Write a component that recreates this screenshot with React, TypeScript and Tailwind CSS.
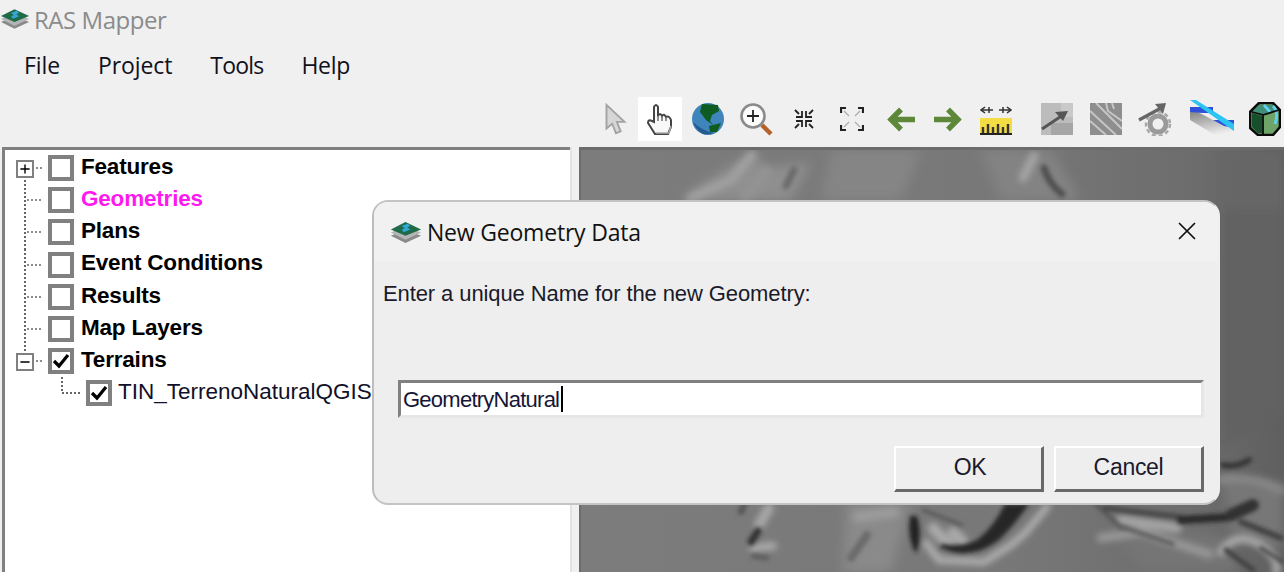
import { Minus, Plus, X } from "lucide-react"

const sans = "font-['Open_Sans','Noto_Sans',sans-serif]"
const ms = "font-['Liberation_Sans',Arial,sans-serif]"

const treeItems = [
  { name: "Features", expander: "plus", bold: true },
  { name: "Geometries", bold: true, pink: true },
  { name: "Plans", bold: true },
  { name: "Event Conditions", bold: true },
  { name: "Results", bold: true },
  { name: "Map Layers", bold: true },
  { name: "Terrains", expander: "minus", bold: true, checked: true },
]

function RasIcon({ className }: { className?: string }) {
  return (
    <svg viewBox="0 0 32 24" className={className}>
      <path d="M1 15 L15 9 L30 15 L15 22 Z" fill="#8a8a8a" />
      <path d="M1 12 L15 6 L30 12 L15 19 Z" fill="#b5b5b5" />
      <path d="M1 9 L15 2 L30 9 L15 15 Z" fill="#1f6b47" />
      <path d="M12 10 L16 8 L13 6 L18 4 M19 5 L15 7 L18 9 L13 11" stroke="#35a7d8" strokeWidth="1.6" fill="none" />
    </svg>
  )
}

function Check() {
  return (
    <svg viewBox="0 0 18 18" className="h-[18px] w-[18px]">
      <path d="M2 9 L7 14 L16 3" stroke="#000" strokeWidth="3.2" fill="none" />
    </svg>
  )
}

function CheckBox({ checked }: { checked?: boolean }) {
  return (
    <span className="flex h-[26px] w-[26px] shrink-0 items-center justify-center border-[4px] border-[#808080] bg-white">
      {checked && <Check />}
    </span>
  )
}

function Connector({ expander, last }: { expander?: string; last?: boolean }) {
  return (
    <span className="relative h-[32.2px] w-[48px] shrink-0">
      <svg width="48" height="33" className="block">
        {expander !== "plus" && !last && <path d="M25 0 V33" stroke="#666" strokeWidth="2" strokeDasharray="2 2" />}
        {expander === "plus" && <path d="M25 24 V33" stroke="#666" strokeWidth="2" strokeDasharray="2 2" />}
        {last && <path d="M25 0 V8" stroke="#666" strokeWidth="2" strokeDasharray="2 2" />}
        <path d={expander ? "M36 16 H44" : "M27 16 H43"} stroke="#666" strokeWidth="1.5" strokeDasharray="2 2" />
      </svg>
      {expander && (
        <span className="absolute left-[16px] top-[8px] flex h-[18px] w-[18px] items-center justify-center border-2 border-[#808080] bg-white">
          {expander === "plus" ? <Plus size={14} strokeWidth={2.4} color="#000" /> : <Minus size={14} strokeWidth={2.4} color="#000" />}
        </span>
      )}
    </span>
  )
}

function Terrain() {
  return (
    <svg viewBox="0 0 703 422" preserveAspectRatio="none" className="block h-full w-full">
      <defs>
        <filter id="b6" x="-20%" y="-20%" width="140%" height="140%"><feGaussianBlur stdDeviation="6" /></filter>
        <filter id="b3" x="-20%" y="-20%" width="140%" height="140%"><feGaussianBlur stdDeviation="3" /></filter>
        <filter id="b2" x="-20%" y="-20%" width="140%" height="140%"><feGaussianBlur stdDeviation="1.9" /></filter>
        <linearGradient id="base" x1="0" x2="1" y1="0" y2="0">
          <stop offset="0" stopColor="#7c7c7c" />
          <stop offset="0.6" stopColor="#787878" />
          <stop offset="0.88" stopColor="#6c6c6c" />
          <stop offset="1" stopColor="#5f5f5f" />
        </linearGradient>
      </defs>
      <rect width="703" height="422" fill="url(#base)" />

      {/* broad shading */}
      <g filter="url(#b6)">
        <path d="M98 50 L126 30 L171 3 L188 18 L230 12 L210 50 Z" fill="#8f8f8f" />
        <path d="M250 0 L340 0 L320 50 L240 50 Z" fill="#858585" />
        <path d="M400 0 L470 0 L500 50 L420 50 Z" fill="#838383" />
        <path d="M640 0 L703 0 L703 60 L640 60 Z" fill="#666" />
        <path d="M640 60 L703 60 L703 260 L640 300 Z" fill="#626262" />
        <path d="M265 352 L330 352 L310 422 L262 422 Z" fill="#8a8a8a" />
        <path d="M530 375 L640 385 L660 422 L560 422 Z" fill="#757575" />
        <path d="M640 325 L703 335 L703 400 L650 385 Z" fill="#777" />
      </g>

      {/* ridges, light */}
      <g filter="url(#b3)" fill="none" strokeLinecap="round" strokeLinejoin="round">
        <path d="M171 5 L150 30 L110 48" stroke="#a0a0a0" strokeWidth="9" />
        <path d="M185 22 L165 45" stroke="#939393" strokeWidth="12" />
        <path d="M453 6 L442 28" stroke="#a4a4a4" strokeWidth="9" />
        <path d="M466 357 L444 383 L430 395 L403 412 L358 410 L345 393" stroke="#afafaf" strokeWidth="7" />
        <path d="M352 378 L368 395 M372 382 L382 392" stroke="#aaa" strokeWidth="11" />
        <path d="M277 367 L313 362" stroke="#9b9b9b" strokeWidth="11" />
        <path d="M188 358 L178 375" stroke="#a8a8a8" strokeWidth="10" />
        <path d="M172 398 L192 396" stroke="#aaa" strokeWidth="8" />
        <path d="M540 370 L596 378" stroke="#a4a4a4" strokeWidth="10" />
        <path d="M520 388 L560 382 L628 404" stroke="#979797" strokeWidth="9" />
        <path d="M640 402 Q655 380 680 395 Q700 410 695 422" stroke="#a8a8a8" strokeWidth="8" />
        <path d="M640 330 Q670 326 700 340" stroke="#868686" strokeWidth="9" />
      </g>

      {/* channels, dark */}
      <g filter="url(#b2)" fill="none" strokeLinecap="round">
        <path d="M448 354 Q436 372 418 390 Q398 405 378 403 Q365 402 358 397 L362 394 Q380 398 396 390 Q412 378 424 354 Z" fill="#262626" />
        <path d="M336 366 Q342 385 335 404 Q326 388 329 366 Z" fill="#222" />
        <path d="M342 360 L381 375" stroke="#555" strokeWidth="3" />
        <path d="M213 20 L205 36" stroke="#6a6a6a" strokeWidth="7" />
        <path d="M463 18 Q468 34 481 44" stroke="#505050" strokeWidth="7" />
        <path d="M163 355 L160 362" stroke="#555" strokeWidth="6" />
        <path d="M177 381 L170 392" stroke="#333" strokeWidth="7" />
        <path d="M172 406 L186 408" stroke="#5c5c5c" strokeWidth="5" />
        <path d="M286 385 L270 408" stroke="#6a6a6a" strokeWidth="8" />
        <path d="M515 354 L540 378" stroke="#555" strokeWidth="4" />
        <path d="M538 376 L592 394" stroke="#5a5a5a" strokeWidth="4" />
        <path d="M524 358 L600 367" stroke="#444" strokeWidth="5" />
        <path d="M600 370 L650 367" stroke="#2c2c2c" strokeWidth="8" />
        <path d="M650 365 L672 355" stroke="#333" strokeWidth="12" />
        <path d="M660 372 L700 388" stroke="#404040" strokeWidth="6" />
        <path d="M642 315 Q655 318 668 310" stroke="#363636" strokeWidth="6" />
        <path d="M645 400 L672 420" stroke="#404040" strokeWidth="5" />
        <path d="M680 398 L702 412" stroke="#484848" strokeWidth="4" />
      </g>
    </svg>
  )
}

function Pointer() {
  return (
    <svg viewBox="0 0 24 36" className="h-[34px] w-[24px]">
      <path d="M3 3 V28 L9 23 L13 33 L18 31 L14 21 L22 21 Z" fill="#d6d6d6" stroke="#a3a3a3" strokeWidth="2" />
    </svg>
  )
}

function Hand() {
  return (
    <svg viewBox="0 0 28 34" className="h-[34px] w-[28px]">
      <path d="M8 20 L8 5 Q10 1 12 5 L12 14 Q14 10 16 14 Q18 11 20 15 Q23 13 25 18 L25 25 L22 32 L9 32 L2 21 Q2 17 6 19 Z" fill="#f8f8f8" stroke="#444" strokeWidth="2" />
      <path d="M12 14 V19 M16 14 V19 M20 15 V19" stroke="#666" strokeWidth="1.4" />
      <path d="M10 31 H23 L25 24" stroke="#aaa" strokeWidth="1.5" fill="none" />
    </svg>
  )
}

function Globe() {
  return (
    <svg viewBox="0 0 32 32" className="h-[32px] w-[32px]">
      <circle cx="16" cy="16" r="16" fill="#3f84ba" />
      <path d="M10 1 L26 2 L27 8 L20 12 L18 18 L21 22 L14 17 L8 9 Z" fill="#0f5c22" />
      <path d="M17 23 L29 20 L25 29 L18 29 Z" fill="#0f5c22" />
      <path d="M1 19 Q4 27 11 31 Q18 32 22 30 Q10 28 1 19" fill="#225a8f" />
    </svg>
  )
}

function Zoom() {
  return (
    <svg viewBox="0 0 34 34" className="h-[34px] w-[34px]">
      <circle cx="14" cy="14" r="11.5" fill="#fbfbfb" stroke="#8a8a8a" strokeWidth="2.6" />
      <path d="M8 14 H20 M14 8 V20" stroke="#222" strokeWidth="1.8" />
      <path d="M23 23 L32 32" stroke="#b4622b" strokeWidth="4.5" />
    </svg>
  )
}

function Shrink() {
  return (
    <svg viewBox="0 0 24 24" className="h-[24px] w-[24px]" fill="none" stroke="#222" strokeWidth="1.8">
      <path d="M3 3 L7 7 M4 10 H10 V4 M21 3 L17 7 M20 10 H14 V4 M3 21 L7 17 M4 14 H10 V20 M21 21 L17 17 M20 14 H14 V20" />
    </svg>
  )
}

function Expand() {
  return (
    <svg viewBox="0 0 24 24" className="h-[24px] w-[24px]" fill="none" stroke="#222" strokeWidth="2.2">
      <path d="M1 6 V1 H6 M23 6 V1 H18 M1 18 V23 H6 M23 18 V23 H18" />
      <path d="M4 4 L9 9 M20 4 L15 9 M4 20 L9 15 M20 20 L15 15" stroke="#aaa" strokeWidth="1.2" />
    </svg>
  )
}

function ArrowIcon({ flip }: { flip?: boolean }) {
  return (
    <svg viewBox="0 0 28 24" className={flip ? "h-[25px] w-[28px] -scale-x-100" : "h-[25px] w-[28px]"}>
      <path d="M28 12 H6 M14 2 L4 12 L14 22" stroke="#5d8739" strokeWidth="5.4" fill="none" />
    </svg>
  )
}

function Ruler() {
  return (
    <svg viewBox="0 0 32 32" className="h-[32px] w-[32px]">
      <path d="M1 7 H13 M19 7 H31 M5 4 L1 7 L5 10 M27 4 L31 7 L27 10 M9 4 V10 M23 4 V10" stroke="#333" strokeWidth="1.5" fill="none" />
      <rect x="0" y="15" width="32" height="17" fill="#f4dc45" />
      <path d="M3 32 V24 M8 32 V21 M13 32 V24 M18 32 V21 M23 32 V24 M28 32 V21" stroke="#333" strokeWidth="2.4" />
      <path d="M0 31 H32" stroke="#222" strokeWidth="2" />
    </svg>
  )
}

function GrayArrow() {
  return (
    <svg viewBox="0 0 32 32" className="h-[32px] w-[32px]">
      <rect width="32" height="32" fill="#bcbcbc" />
      <path d="M20 0 H32 V14 H20 Z" fill="#c9c9c9" />
      <path d="M10 20 H32 V32 H10 Z" fill="#a6a6a6" />
      <path d="M1 26 L22 12" stroke="#555" strokeWidth="3" />
      <path d="M14 9 L27 8 L22 18 Z" fill="#555" />
    </svg>
  )
}

function GrayLines() {
  return (
    <svg viewBox="0 0 32 32" className="h-[32px] w-[32px]">
      <rect width="32" height="32" fill="#8e8e8e" />
      <path d="M0 8 L26 32 M0 18 L16 32 M6 0 L32 26 M16 0 L18 8 L32 18 M22 0 L24 6" stroke="#c6c6c6" strokeWidth="2" fill="none" />
    </svg>
  )
}

function GrayGear() {
  return (
    <svg viewBox="0 0 34 34" className="h-[34px] w-[34px]">
      <circle cx="20" cy="22" r="8" fill="none" stroke="#9a9a9a" strokeWidth="5" />
      <circle cx="20" cy="22" r="12" fill="none" stroke="#a8a8a8" strokeWidth="2.5" strokeDasharray="4 3" />
      <path d="M1 18 L23 6" stroke="#666" strokeWidth="3.2" />
      <path d="M17 2 L28 1 L25 12 Z" fill="#666" />
    </svg>
  )
}

function Channel() {
  return (
    <svg viewBox="0 0 44 38" className="h-[38px] w-[44px]">
      <defs>
        <linearGradient id="shade" x1="0" x2="0.3" y1="0" y2="1">
          <stop offset="0" stopColor="#777" />
          <stop offset="1" stopColor="#f0f0f0" />
        </linearGradient>
      </defs>
      <path d="M0 8 L23 20 L44 30 L44 38 L30 38 L0 20 Z" fill="url(#shade)" />
      <path d="M0 7 H23 V13 H12 L0 12 Z" fill="#2f50d8" />
      <path d="M23 20 H44 V28 L34 26 Z" fill="#2f50d8" />
      <path d="M0 0 H6 L44 24 V31 Z" fill="#2cc4f2" />
    </svg>
  )
}

function Cube() {
  return (
    <svg viewBox="0 0 32 34" className="h-[34px] w-[32px]">
      <path d="M1 10 L10 1 H24 L31 8 V25 L24 33 H9 L1 26 Z" fill="#6fa468" stroke="#0b0b0b" strokeWidth="2.6" />
      <path d="M3 10 L10 3 H24 L29 8 L14 13 Z" fill="#3f8f78" />
      <path d="M3 11 L13 14 V31 H9 L3 25 Z" fill="#174f2c" />
      <path d="M15 3 L21 10 M24 4 Q30 10 26 22" stroke="#64d0f0" strokeWidth="2.8" fill="none" />
      <path d="M3 10 L14 13 V32 M14 13 L30 8" stroke="#0b0b0b" strokeWidth="1.8" fill="none" />
    </svg>
  )
}

export default function App() {
  return (
    <div className="relative flex h-[572px] w-[1284px] flex-col overflow-hidden bg-[#f0f0f0]">
      {/* Title bar */}
      <div className="flex h-[40px] shrink-0 items-center">
        <RasIcon className="h-[24px] w-[31px] -translate-y-[1px]" />
        <span className={`${sans} ml-[3px] text-[24px] leading-none tracking-[-0.45px] text-[#8b8b8b]`}>RAS Mapper</span>
      </div>

      {/* Menu */}
      <div className={`${sans} flex h-[50px] shrink-0 items-center gap-[38px] pl-[24px] text-[23px] leading-none tracking-[-0.1px] text-[#10101c]`}>
        <span>File</span>
        <span>Project</span>
        <span className="tracking-[-0.8px]">Tools</span>
        <span className="tracking-[-0.3px]">Help</span>
      </div>

      {/* Toolbar */}
      <div className="flex h-[57px] shrink-0 items-start pl-[592px] pt-[7px]">
        <div className="flex h-[44px] w-[46px] shrink-0 items-center justify-center"><Pointer /></div>
        <div className="flex h-[44px] w-[44px] shrink-0 items-center justify-center bg-white"><Hand /></div>
        <div className="ml-[2px] flex h-[44px] w-[48px] shrink-0 items-center justify-center"><Globe /></div>
        <div className="flex h-[44px] w-[48px] shrink-0 items-center justify-center"><Zoom /></div>
        <div className="flex h-[44px] w-[48px] shrink-0 items-center justify-center"><Shrink /></div>
        <div className="flex h-[44px] w-[48px] shrink-0 items-center justify-center"><Expand /></div>
        <div className="flex h-[44px] w-[49px] shrink-0 items-center justify-center"><ArrowIcon /></div>
        <div className="flex h-[44px] w-[46px] shrink-0 items-center justify-center"><ArrowIcon flip /></div>
        <div className="flex h-[44px] w-[50px] shrink-0 items-center justify-center"><Ruler /></div>
        <div className="ml-[12px] flex h-[44px] w-[48px] shrink-0 items-center justify-center"><GrayArrow /></div>
        <div className="flex h-[44px] w-[50px] shrink-0 items-center justify-center"><GrayLines /></div>
        <div className="flex h-[44px] w-[48px] shrink-0 items-center justify-center"><GrayGear /></div>
        <div className="ml-[11px] flex h-[44px] w-[44px] shrink-0 items-center justify-center"><Channel /></div>
        <div className="ml-[15px] flex h-[44px] w-[32px] shrink-0 items-center justify-center"><Cube /></div>
      </div>

      {/* Tree and map */}
      <div className="flex min-h-0 flex-1">
        <div className="ml-[2px] w-[568px] shrink-0 border-l-[3px] border-t-[3px] border-[#808080] bg-white pt-[2px]">
          {treeItems.map((item) => (
            <div key={item.name} className="flex h-[32.2px] items-center">
              <span className="-ml-[5px] flex items-center">
                <Connector expander={item.expander} last={item.expander === "minus"} />
              </span>
              <CheckBox checked={item.checked} />
              <span className={`${ms} ml-[7px] -translate-y-[1px] text-[22.5px] font-bold leading-none tracking-[-0.2px] ${item.pink ? "text-[#ff19f0]" : "text-black"}`}>
                {item.name}
              </span>
            </div>
          ))}
          <div className="flex h-[32.2px] items-center">
            <svg width="86" height="33" className="-ml-[5px] block shrink-0">
              <path d="M62 0 V16 H80" stroke="#666" strokeWidth="2" fill="none" strokeDasharray="2 2" />
            </svg>
            <CheckBox checked />
            <span className={`${ms} ml-[6px] -translate-y-[1px] whitespace-nowrap text-[22.5px] leading-none tracking-[0px] text-[#101028]`}>TIN_TerrenoNaturalQGIS</span>
          </div>
        </div>
        <div className="w-[9px] shrink-0 border-l-2 border-[#e2e2e2]" />
        <div className="min-w-0 flex-1 border-l-2 border-t-[3px] border-[#6c6c6c]">
          <Terrain />
        </div>
      </div>

      {/* Dialog */}
      <div className="absolute left-[372px] top-[200px] flex h-[305px] w-[848px] flex-col rounded-[16px] border-2 border-b-[#c4c4c4] border-l-[#bdbdbd] border-r-[#efefef] border-t-[#c4c4c4] bg-[#eeeeee]">
        <div className="flex h-[60px] shrink-0 items-center rounded-t-[14px] bg-[#f1f1f1] pl-[15px] pr-[16px]">
          <RasIcon className="h-[25px] w-[35px]" />
          <span className={`${sans} ml-[3px] text-[23px] leading-none tracking-[-0.2px] text-[#111]`}>New Geometry Data</span>
          <X size={30} strokeWidth={1.4} color="#111" className="ml-auto -translate-y-[1px]" />
        </div>
        <div className={`${ms} flex-1 pl-[9px] pt-[19px] text-[22px] leading-[26px] tracking-[-0.1px] text-[#1a1a2a]`}>
          Enter a unique Name for the new Geometry:
          <div className="ml-[15px] mt-[73px] flex h-[38px] w-[806px] items-center border-[3px] border-b-[#e6e6e6] border-l-[#808080] border-r-[#e6e6e6] border-t-[#808080] bg-white pl-[2px]">
            <span className="translate-y-[1px] leading-none tracking-[-0.75px] text-[#161636]">GeometryNatural</span>
            <span className="ml-[2px] h-[26px] w-[2px] bg-black" />
          </div>
          <div className="ml-[15px] mt-[28px] flex w-[806px] justify-end gap-[10px]">
            <button className="h-[46px] w-[150px] border-2 border-b-[3px] border-r-[3px] border-b-[#696969] border-l-white border-r-[#696969] border-t-white bg-[#eeeeee] pb-[2px] pl-[3px] text-[23px] leading-none tracking-[-0.3px] text-[#1a1a2a]">OK</button>
            <button className="h-[46px] w-[150px] border-2 border-b-[3px] border-r-[3px] border-b-[#696969] border-l-white border-r-[#696969] border-t-white bg-[#eeeeee] pb-[2px] text-[23px] leading-none tracking-[-0.3px] text-[#1a1a2a]">Cancel</button>
          </div>
        </div>
      </div>
    </div>
  )
}
